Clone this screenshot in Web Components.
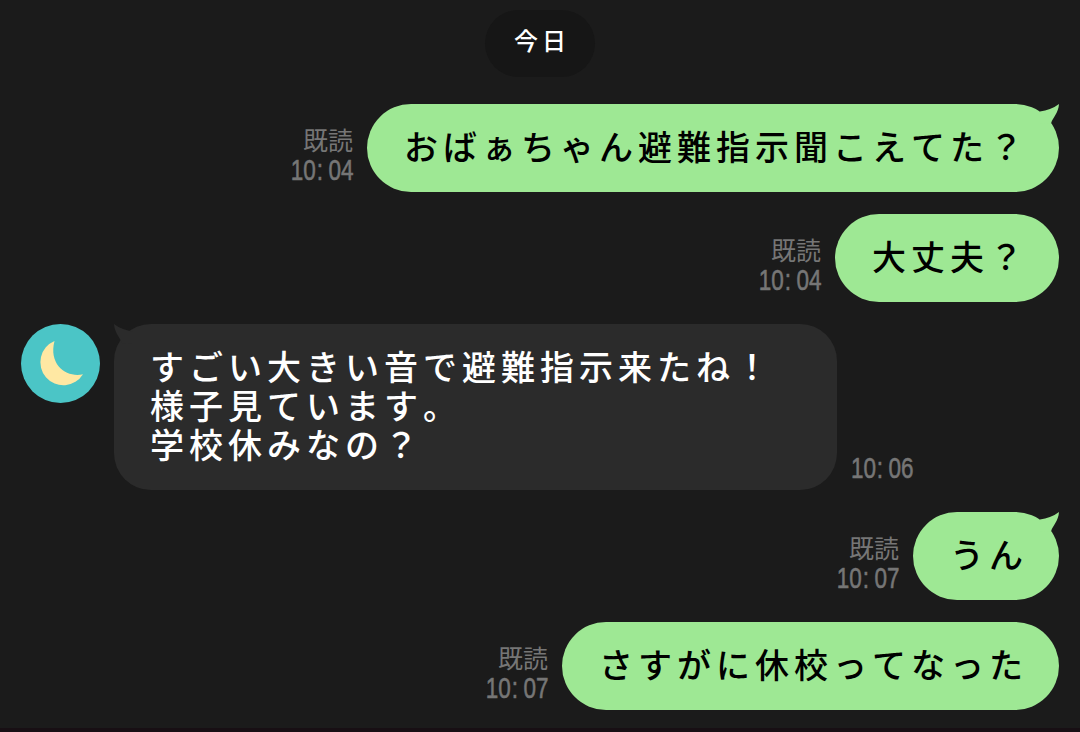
<!DOCTYPE html>
<html lang="ja">
<head>
<meta charset="utf-8">
<title>トーク</title>
<style>
  body {
    margin: 0;
    background: #1b1b1b;
    font-family: "Liberation Sans", "Noto Sans CJK JP", sans-serif;
    font-kerning: none;
    overflow: hidden;
  }
</style>
</head>
<body>
<chat-room>
  <chat-date>今日</chat-date>
  <chat-message sent tail read time="10:04">おばぁちゃん避難指示聞こえてた？</chat-message>
  <chat-message sent read time="10:04">大丈夫？</chat-message>
  <chat-message tail time="10:06"><moon-avatar slot="avatar"></moon-avatar>すごい大きい音で避難指示来たね！<br>様子見ています。<br>学校休みなの？</chat-message>
  <chat-message sent tail read time="10:07">うん</chat-message>
  <chat-message sent read time="10:07">さすがに休校ってなった</chat-message>
</chat-room>

<script>
class ChatRoom extends HTMLElement {
  constructor() {
    super();
    this.attachShadow({ mode: 'open' }).innerHTML = `
      <style>
        :host {
          display: flex;
          flex-direction: column;
          gap: 22px;
          box-sizing: border-box;
          height: 732px;
          padding: 10px 21px 0;
          border-bottom: 4px solid #180f14;
        }
      </style>
      <slot></slot>
    `;
  }
}

class ChatDate extends HTMLElement {
  constructor() {
    super();
    this.attachShadow({ mode: 'open' }).innerHTML = `
      <style>
        :host {
          display: flex;
          align-items: center;
          justify-content: center;
          align-self: center;
          box-sizing: border-box;
          width: 110px;
          height: 67px;
          margin-bottom: 5px;
          padding: 0 0 3px 4px;
          border-radius: 34px;
          background: #161616;
          color: #fff;
          font-size: 24px;
          font-weight: 500;
          letter-spacing: 4px;
          line-height: 28px;
        }
      </style>
      <slot></slot>
    `;
  }
}

class MoonAvatar extends HTMLElement {
  constructor() {
    super();
    this.attachShadow({ mode: 'open' }).innerHTML = `
      <style>
        :host { display: block; width: 79px; height: 79px; }
        svg { display: block; }
      </style>
      <svg width="79" height="79" viewBox="0 0 79 79">
        <circle cx="39.5" cy="39.5" r="39.5" fill="#4bc5c6"/>
        <path d="M33.5 17 A23 23 0 1 0 62 50.2 C47 54 27 42 33.5 17 Z" fill="#ffe8a3"/>
      </svg>
    `;
  }
}

/**
 * One row of the talk: avatar, bubble, and read mark with time.
 * Attributes: sent, tail, read, time.
 */
class ChatMessage extends HTMLElement {
  constructor() {
    super();
    this.attachShadow({ mode: 'open' });
  }

  connectedCallback() {
    const [hour, minute] = this.getAttribute('time').split(':');
    const tail = '<svg class="tail" width="26" height="24" viewBox="0 0 26 24"><path d="M26 0 C20 4.5 14 6.5 7 7.5 L7 20 L18.2 19 C19.5 14 25.5 9 26 0 Z"/></svg>';

    this.shadowRoot.innerHTML = `
      <style>
        :host {
          --bubble: #2b2b2b;
          display: flex;
          align-items: flex-start;
          gap: 14px;
          color: #fff;
        }
        :host([sent]) {
          --bubble: #9ee894;
          flex-direction: row-reverse;
          color: #000;
        }
        .bubble {
          position: relative;
          box-sizing: border-box;
          flex-shrink: 0;
          padding: 24.5px 31px 24.5px 37px;
          border-radius: 37px;
          background: var(--bubble);
          font-size: 34px;
          font-weight: 500;
          letter-spacing: 5px;
          line-height: 39px;
          white-space: nowrap;
        }
        :host(:not([sent])) .bubble {
          width: 723px;
          padding-left: 36px;
        }
        :host([sent]) .bubble {
          border-radius: 44px;
        }
        .tail {
          position: absolute;
          top: 0;
          right: 0;
          fill: var(--bubble);
        }
        :host(:not([sent])) .tail {
          right: auto;
          left: 0;
          transform: scaleX(-1);
        }
        .meta {
          display: flex;
          flex-direction: column;
          align-items: flex-start;
          align-self: flex-end;
          gap: 3px;
          padding-bottom: 9px;
          color: #767676;
          font-size: 25px;
          line-height: 28px;
        }
        :host([sent]) .meta {
          align-items: flex-end;
        }
        .read {
          line-height: 26px;
        }
        /* narrow digits, all on the same pitch */
        .time {
          display: flex;
          font-size: 30px;
          line-height: 26px;
          transform: scaleX(0.75);
          transform-origin: left;
          -webkit-text-stroke: 0.6px #767676;
        }
        :host([sent]) .time {
          transform-origin: right;
        }
        .colon {
          box-sizing: border-box;
          width: 16.7px;
          padding-left: 1px;
        }
      </style>
      <slot name="avatar"></slot>
      <div class="bubble">${this.hasAttribute('tail') ? tail : ''}<slot></slot></div>
      <div class="meta">
        ${this.hasAttribute('read') ? '<span class="read">既読</span>' : ''}
        <span class="time"><span>${hour}</span><span class="colon">:</span><span>${minute}</span></span>
      </div>
    `;
  }
}

customElements.define('chat-room', ChatRoom);
customElements.define('chat-date', ChatDate);
customElements.define('moon-avatar', MoonAvatar);
customElements.define('chat-message', ChatMessage);
</script>
</body>
</html>
